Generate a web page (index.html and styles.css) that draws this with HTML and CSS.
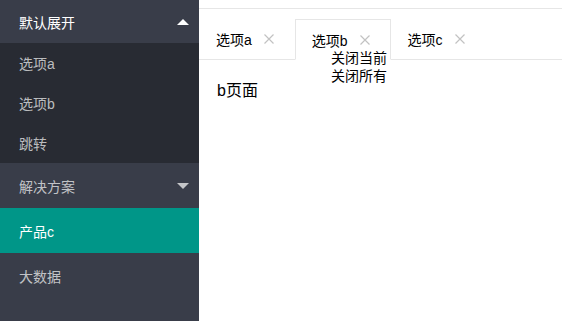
FILE: index.html
```html
<!DOCTYPE html>
<html lang="zh-CN">
<head>
    <meta charset="UTF-8">
    <meta name="viewport" content="width=device-width, initial-scale=1.0">
    <title>Tabs</title>
    <link rel="stylesheet" href="styles.css">
</head>
<body>

<div class="layout">
    <ul class="side-nav">
        <li class="nav-item open">
            <a class="nav-title" href="#">默认展开<span class="more up"></span></a>
            <ul class="nav-child">
                <li><a href="#">选项a</a></li>
                <li><a href="#">选项b</a></li>
                <li><a href="#">跳转</a></li>
            </ul>
        </li>
        <li class="nav-item">
            <a class="nav-title" href="#">解决方案<span class="more down"></span></a>
        </li>
        <li class="nav-item active">
            <a class="nav-title" href="#">产品c</a>
        </li>
        <li class="nav-item">
            <a class="nav-title" href="#">大数据</a>
        </li>
    </ul>

    <div class="main">
        <ul class="tab-title">
            <li>选项a<svg class="close" viewBox="0 0 10 10"><path d="M0.5 0.5L9.5 9.5M9.5 0.5L0.5 9.5"/></svg></li>
            <li class="this">选项b<svg class="close" viewBox="0 0 10 10"><path d="M0.5 0.5L9.5 9.5M9.5 0.5L0.5 9.5"/></svg></li>
            <li>选项c<svg class="close" viewBox="0 0 10 10"><path d="M0.5 0.5L9.5 9.5M9.5 0.5L0.5 9.5"/></svg></li>
        </ul>
        <div class="tab-content">b页面</div>

        <ul class="context-menu">
            <li>关闭当前</li>
            <li>关闭所有</li>
        </ul>
    </div>
</div>

</body>
</html>
```

FILE: styles.css
```css
body {
    margin: 0;
    font-family: "Liberation Sans", "Noto Sans CJK SC", sans-serif;
    font-size: 14px;
    color: #333;
}
ul {
    list-style: none;
    margin: 0;
    padding: 0;
}
a {
    text-decoration: none;
}
.layout {
    display: flex;
    height: 321px;
}
.side-nav {
    width: 199px;
    flex-shrink: 0;
    background: #393d49;
}
.nav-title {
    display: flex;
    align-items: center;
    justify-content: space-between;
    height: 45px;
    padding: 0 10px 0 19px;
    color: rgba(255,255,255,.7);
}
.open > .nav-title {
    height: 43px;
    color: #fff;
}
.active > .nav-title {
    background: #009688;
    color: #fff;
}
.nav-child {
    background: #282b33;
}
.nav-child a {
    display: flex;
    align-items: center;
    height: 40px;
    padding-left: 19px;
    color: rgba(255,255,255,.7);
}
.more {
    width: 0;
    height: 0;
    border: 6px solid transparent;
}
.more.up {
    border-top: none;
    border-bottom-color: #fff;
}
.more.down {
    border-bottom: none;
    border-top-color: rgba(255,255,255,.7);
}
.main {
    position: relative;
    flex: 1;
    margin-top: 8px;
    border-top: 1px solid #e6e6e6;
    padding-top: 10px;
}
.tab-title {
    display: flex;
    height: 40px;
    border-bottom: 1px solid #e6e6e6;
}
.tab-title li {
    display: flex;
    align-items: center;
    height: 40px;
    padding: 0 21px 0 17px;
    box-sizing: border-box;
    color: #000;
}
.tab-title li.this {
    height: 41px;
    padding: 0 20px 0 16px;
    border: 1px solid #e6e6e6;
    border-bottom-color: #fff;
}
.close {
    width: 10px;
    height: 10px;
    margin-left: 12px;
    stroke: #c2c2c2;
    stroke-width: 1.2;
    fill: none;
}
.tab-content {
    padding: 17px 18px;
    font-size: 16px;
    color: #000;
}
.context-menu {
    position: absolute;
    left: 132px;
    top: 40px;
    line-height: 18px;
    color: #000;
}
```
